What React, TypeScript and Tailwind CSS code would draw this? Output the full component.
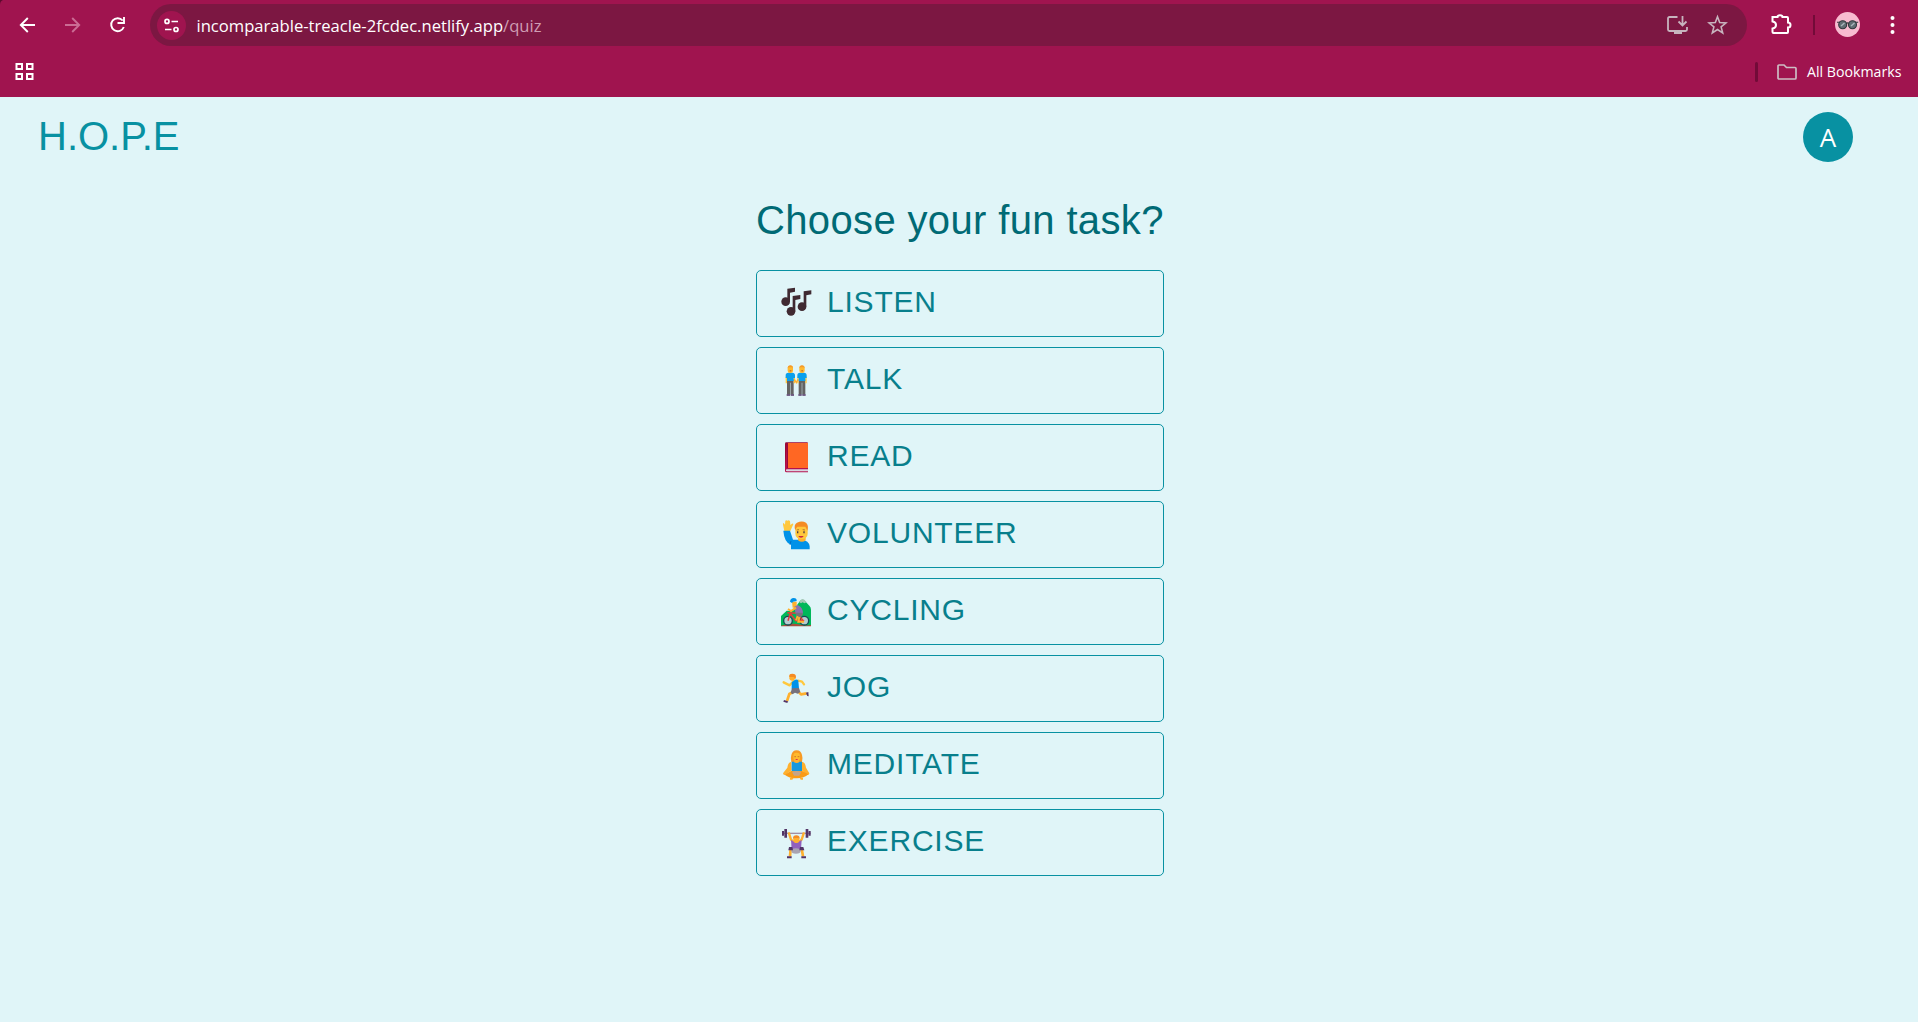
import type { ReactNode } from "react";

function Emoji({ children }: { children: ReactNode }) {
  return (
    <svg width="30" height="30" viewBox="30 30 90 90" className="shrink-0 overflow-visible">
      {children}
    </svg>
  );
}

const Notes = () => (
  <Emoji>
    <g fill="#402a32">
      <ellipse cx="47" cy="68" rx="13" ry="13" />
      <ellipse cx="63" cy="97" rx="13" ry="13" />
      <ellipse cx="96" cy="83" rx="13" ry="13" />
      <path d="M52 29 75 26V38L60 41V68H52ZM68 51 91 48V60L76 63V97H68ZM101 37 124 34V46L109 49V83H101Z" />
    </g>
  </Emoji>
);

const Friend = () => (
  <>
    <path d="M51 70h20v45H51z" fill="#636363" />
    <path d="M60 80h2v35h-2z" fill="#b9cdd1" />
    <path d="M47 62h4v20h-4zM71 62h4v20h-4z" fill="#ffc83d" />
    <path d="M47 66V58q0-8 8-8h12q8 0 8 8v8h-4v9H51v-9z" fill="#0aa0ec" />
    <rect x="53" y="29" width="16" height="22" rx="7" fill="#ffb92e" />
    <path d="M53 37q0-9 8-9t8 9l-3-3H56z" fill="#f59a2a" />
    <path d="M50 115h10v4H50zM62 115h10v4H62z" fill="#533566" />
    <path d="M59 43h5v3h-5z" fill="#bb5b2a" />
  </>
);

const Pair = () => (
  <Emoji>
    <Friend />
    <g transform="translate(35)">
      <Friend />
    </g>
    <path d="m73 70 6 10 5-10" fill="none" stroke="#ffb02e" strokeWidth="4" />
  </Emoji>
);

const Book = () => (
  <Emoji>
    <path d="M49 28h62q3 0 3 3v76H45V32q0-4 4-4Z" fill="#990838" />
    <path d="M54 30h60v75H54z" fill="#ff6723" />
    <path d="M50 108h64v7H50z" fill="#d8d5e0" />
    <path d="M45 103v11q0 4 5 4h64v-3H51q-3 0-3-3t3-3h63v-4H51V31" fill="#b4114d" />
  </Emoji>
);

const Volunteer = () => (
  <Emoji>
    <path d="M43 63 39 44q-1-4 2-5l4 5 1-12q3-3 6 0l4-1 4 2 1 12 5-4q4-1 4 2L61 63Z" fill="#ffc83d" />
    <path d="M40 62h20l9 27h26q22 2 24 20v9H63v-14Q43 99 40 62Z" fill="#0092e8" />
    <path d="M60 104 63 93" stroke="#006fc0" strokeWidth="3" />
    <path d="M84 82h23v9q-11 9-23 0z" fill="#ffb02e" />
    <rect x="76" y="40" width="37" height="47" rx="16" fill="#ffc83d" />
    <path d="M76 61q-6-16 5-23 15-7 27 0 9 7 4 24-3-8-6-12H82q-4 4-6 11Z" fill="#f58b24" />
    <path d="M81 64h4v6h-4zM100 64h4v6h-4z" fill="#493746" />
    <path d="M85 78h16q-2 5-8 5t-8-5" fill="#ca2842" />
    <path d="m80 60 7-1M98 59l7 1" stroke="#8b4d26" strokeWidth="2" />
  </Emoji>
);

const Cyclist = () => (
  <Emoji>
    <path d="M33 117V87l17-16 18 1 22-30q7-7 14-1l14 15q5 4 5 12v49z" fill="#00b85a" />
    <path d="m87 45 6-7q5-4 10 0l7 8-7 3-5-3-5 3Z" fill="#a5c8b7" />
    <path d="M33 116q30-10 59-3 15 4 31 1v4H33z" fill="#a94e3b" />
    <g fill="#b5cdd0" stroke="#174a54" strokeWidth="4">
      <circle cx="54" cy="101" r="13" />
      <circle cx="103" cy="101" r="13" />
    </g>
    <path d="M54 101 61 78h18l20 22-22 1-15-20M52 77l11 1" fill="none" stroke="#e5383b" strokeWidth="4.500" />
    <path d="M66 44h14v18H68z" fill="#ffb02e" />
    <path d="M60 44q1-11 11-11 10 0 9 9l-11 2-3 4z" fill="#0092e8" />
    <path d="m73 59 10-5q16 7 16 26H77z" fill="#8c72b0" />
    <path d="m78 62-15 10-9-6" fill="none" stroke="#ffb02e" strokeWidth="6" />
    <path d="M79 77h19q3 8-9 14l-11-4Z" fill="#77747b" />
    <path d="m83 87-5 13M88 90l-3 14h17" fill="none" stroke="#ffb02e" strokeWidth="6" />
  </Emoji>
);

const Runner = () => (
  <Emoji>
    <path d="m70 52-11 12-18-9M84 50l12 3 6 8" fill="none" stroke="#ffc83d" strokeWidth="7" strokeLinecap="round" strokeLinejoin="round" />
    <path d="m69 84-11 6-7 21M84 82l9 9 17-3" fill="none" stroke="#ffb02e" strokeWidth="8" strokeLinejoin="round" />
    <rect x="58" y="31" width="17" height="19" rx="7" fill="#ffb02e" />
    <path d="M58 39q-2-10 9-10t11 9l-1 7-6-6z" fill="#f58b24" />
    <path d="m65 55 10-8q7-2 10 3l2 24-22 2Z" fill="#0092e8" />
    <path d="m66 73 21-1 4 12-8 5-8-3-8 5-5-5Z" fill="#76717c" />
    <path d="m42 108 12 4-2 5-12-4ZM108 86l7-2 1 13q-5 0-6-5Z" fill="#533566" />
  </Emoji>
);

const Meditate = () => (
  <Emoji>
    <path d="M64 42q3-14 16-14t16 14q3 9 0 21H64q-3-12 0-21Z" fill="#f79a24" />
    <path d="M64 62q-10 2-12 18l-13 17q0 6 7 5l19-14ZM96 62q10 2 12 18l10 17q0 6-7 5L95 88Z" fill="#ffb02e" />
    <rect x="70" y="35" width="20" height="25" rx="9" fill="#ffb92e" />
    <path d="M73 58h14v10H73z" fill="#ffb02e" />
    <path d="M65 62h6q9 8 18 0h7v30H65Z" fill="#1598df" />
    <path d="M63 90h34l18 10q-12 12-35 12T44 101Z" fill="#f99b17" />
    <path d="M66 92q14-4 28 0l-6 12H72Z" fill="#c5a489" />
    <path d="M60 110h11l-4 6h-7ZM89 110h10v6h-7Z" fill="#ffb02e" />
    <path d="M77 54h6v3h-6z" fill="#d73554" />
    <path d="M73 47h5M83 47h5" stroke="#b65a22" strokeWidth="2" />
  </Emoji>
);

const Lifter = () => (
  <Emoji>
    <path d="M37 46h85" stroke="#a18fa5" strokeWidth="4" />
    <path d="M36 39h6v14h-6zM43 33h8v26h-8zM107 33h8v26h-8zM116 39h6v14h-6z" fill="#533566" />
    <path d="m56 43 7 22 9 7M102 43l-7 22-9 7" fill="none" stroke="#ffb02e" strokeWidth="7" />
    <path d="m62 92-2 23M95 92l4 23" stroke="#ffb02e" strokeWidth="8" />
    <path d="m63 66 16 8 16-8-2 29H65Z" fill="#9160bd" />
    <rect x="70" y="54" width="18" height="21" rx="8" fill="#ffb02e" />
    <path d="M69 62q0-10 10-10t10 10l-4-2H74Z" fill="#f58b24" />
    <ellipse cx="78" cy="99" rx="14" ry="8" fill="#a9a4b2" />
    <path d="M57 87h10l2 10H55ZM90 87h10l3 10H88ZM51 115h14v6H51zM94 115h14v6H94z" fill="#533566" />
  </Emoji>
);

const tasks: { label: string; icon: ReactNode }[] = [
  { label: "LISTEN", icon: <Notes /> },
  { label: "TALK", icon: <Pair /> },
  { label: "READ", icon: <Book /> },
  { label: "VOLUNTEER", icon: <Volunteer /> },
  { label: "CYCLING", icon: <Cyclist /> },
  { label: "JOG", icon: <Runner /> },
  { label: "MEDITATE", icon: <Meditate /> },
  { label: "EXERCISE", icon: <Lifter /> },
];

function BrowserBar() {
  return (
    <div className="h-[97px] bg-[#a0144f] font-['Open_Sans','Noto_Sans',sans-serif] text-white">
      <div className="flex h-[50px] items-center">
        <svg width="150" height="50" viewBox="0 0 150 50" fill="none" strokeWidth="1.9" className="shrink-0">
          <path d="M0 0h3Q0 1 0 5Z" fill="#5b0b2d" />
          <path d="M35 25H21M27.800 18 20.800 25l7 7" stroke="#fff" />
          <path d="M65 25h14M72.200 18 79.200 25l-7 7" stroke="#cb6c94" />
          <path d="M122.700 20.500A6.500 6.500 0 1 0 123.800 27M124 17v6h-6.500" stroke="#fff" />
        </svg>
        <div className="flex h-[42px] w-[1597px] shrink-0 items-center rounded-full bg-[#7c1742] pl-[7px]">
          <div className="flex size-[29px] items-center justify-center rounded-full bg-[#a0144f]">
            <svg width="17" height="17" viewBox="0 0 17 17" fill="none" stroke="#fff" strokeWidth="1.7">
              <circle cx="4" cy="4.400" r="2" />
              <path d="M8.500 4.500H15M2 12.500h6.500" />
              <circle cx="13" cy="12.500" r="2" />
            </svg>
          </div>
          <svg width="350" height="24" className="ml-[10px] overflow-visible text-[17px]">
            <text x="0.500" y="18.500" textLength="345" lengthAdjust="spacingAndGlyphs" fill="#fff">
              incomparable-treacle-2fcdec.netlify.app<tspan fill="#cf9db3">/quiz</tspan>
            </text>
          </svg>
          <svg width="64" height="24" viewBox="0 0 64 24" fill="none" stroke="#c7b4be" strokeWidth="1.800" className="mr-[18px] ml-auto">
            <path d="M12.500 4H4.500q-1.500 0-1.500 1.500v11Q3 18 4.500 18h16q1.500 0 1.500-1.500V14M17.500 3v9M13.500 8.500l4 4 4-4" />
            <path d="M9 18h8v3H9z" fill="#c7b4be" stroke="none" />
            <path d="m52.500 3.800 2.200 5.800 6.200.4-4.800 3.900 1.600 6-5.200-3.400-5.200 3.400 1.600-6-4.800-3.900 6.200-.4z" strokeWidth="1.600" />
          </svg>
        </div>
        <svg width="171" height="50" viewBox="1747 0 171 50" className="shrink-0">
          <path d="M1772.500 17H1777.500Q1777.500 15.300 1780 15.300T1782.500 17H1787Q1788 17 1788 18V22.500Q1790.500 22.500 1790.500 25T1788 27.500V32Q1788 33 1787 33H1773.500Q1772.500 33 1772.500 32V28.500Q1776 28 1776 25T1772.500 21.500Z" fill="none" stroke="#fff" strokeWidth="2" />
          <rect x="1813" y="15" width="2" height="20" fill="#720b38" />
          <circle cx="1847.500" cy="24.500" r="12.500" fill="#f8bbd0" />
          <g fill="#5f6c72" stroke="#30383c" strokeWidth="1.100">
            <circle cx="1842.700" cy="24.700" r="4" />
            <circle cx="1852.500" cy="24.700" r="4" />
            <path d="M1837 22.300h3M1846.300 23.500q1.300-1.300 2.600 0M1855 22.300h3.200" fill="none" />
          </g>
          <path d="m1841 26 3.500-3M1851 26l3.500-3" stroke="#a9b5ba" strokeWidth="1.500" />
          <g fill="#fff">
            <circle cx="1892.500" cy="18" r="2" />
            <circle cx="1892.500" cy="25" r="2" />
            <circle cx="1892.500" cy="32" r="2" />
          </g>
        </svg>
      </div>
      <div className="flex h-[43px] items-center justify-between pr-3.5 pl-[15px]">
        <svg width="19" height="19" viewBox="0 0 19 19" fill="none" stroke="#fff" strokeWidth="2">
          <path d="M1.500 2h5.500v5H1.500zM12 2h5.500v5H12zM1.500 12h5.500v5H1.500zM12 12h5.500v5H12z" />
        </svg>
        <div className="flex items-center">
          <div className="h-5 w-[3px] rounded bg-[#720b38]" />
          <svg width="22" height="18" viewBox="0 0 22 18" fill="none" stroke="#cdbdc4" strokeWidth="1.700" className="ml-[18px]">
            <path d="M2 3q0-1 1-1h5l2.500 2.500H19q1 0 1 1V15q0 1-1 1H3q-1 0-1-1Z" />
          </svg>
          <svg width="97" height="22" className="ml-[9px] overflow-visible text-[15px]">
            <text x="0" y="16" textLength="94.500" lengthAdjust="spacingAndGlyphs" fill="#fff">
              All Bookmarks
            </text>
          </svg>
        </div>
      </div>
    </div>
  );
}

export default function App() {
  return (
    <div className="h-[1022px] overflow-hidden bg-[#e0f5f8] font-['Liberation_Sans',Arial,sans-serif]">
      <BrowserBar />
      <header className="flex h-20 items-center justify-between pr-[65px] pl-[38px]">
        <div className="-mt-0.5 text-[40px] leading-[47px] text-[#0891a2]">H.O.P.E</div>
        <div className="flex size-[50px] items-center justify-center rounded-full bg-[#0891a2] font-['Open_Sans',sans-serif] text-[26px] font-medium text-white">
          A
        </div>
      </header>
      <main className="ml-[756px] flex w-[408px] flex-col pt-5">
        <h1 className="mb-[26px] text-[40px] leading-[47px] tracking-[0.36px] whitespace-nowrap text-[#006a75]">
          Choose your fun task?
        </h1>
        <div className="flex flex-col gap-2.5">
          {tasks.map((task) => (
            <button
              key={task.label}
              className="flex h-[67px] items-center rounded-[5px] border border-[#0891a2] pl-[23px] text-[30px] leading-9 tracking-[0.8px] text-[#087f8c]"
            >
              {task.icon}
              <span className="-mt-1 ml-[17px]">{task.label}</span>
            </button>
          ))}
        </div>
      </main>
    </div>
  );
}
